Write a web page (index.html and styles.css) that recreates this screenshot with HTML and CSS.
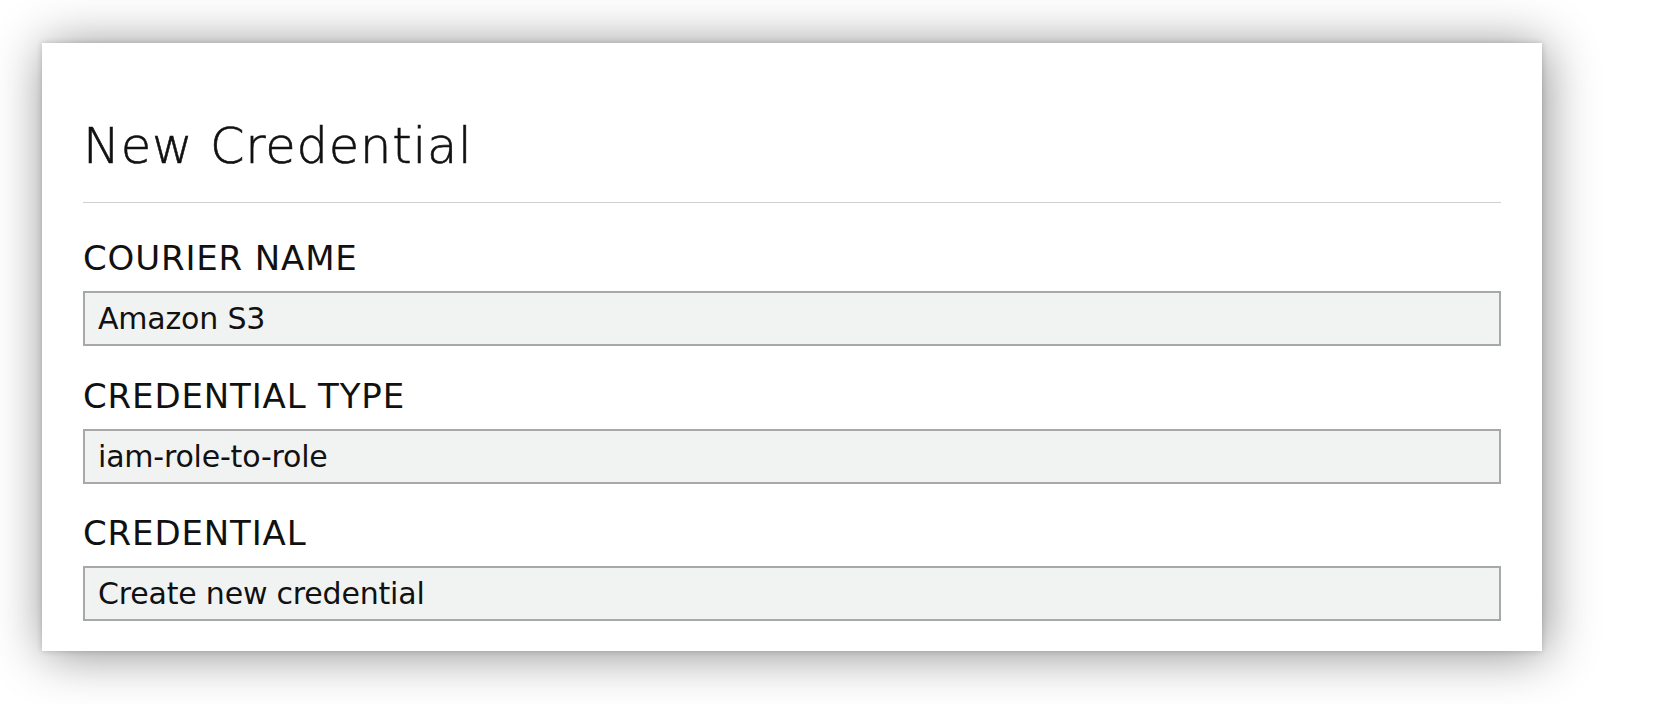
FILE: index.html
```html
<!DOCTYPE html>
<html>
<head>
<meta charset="utf-8">
<link rel="stylesheet" href="styles.css">
</head>
<body>
<div class="page">
  <div class="card">
    <h1 class="title">New Credential</h1>
    <div class="field">
      <div class="label">COURIER NAME</div>
      <div class="box">Amazon S3</div>
    </div>
    <div class="field">
      <div class="label">CREDENTIAL TYPE</div>
      <div class="box">iam-role-to-role</div>
    </div>
    <div class="field">
      <div class="label">CREDENTIAL</div>
      <div class="box">Create new credential</div>
    </div>
  </div>
</div>
</body>
</html>
```

FILE: styles.css
```css
html, body {
  margin: 0;
  padding: 0;
  background: #ffffff;
}
body {
  font-family: "DejaVu Sans", "Liberation Sans", sans-serif;
  color: #111111;
}
.page {
  padding: 43px 0 53px 42px;
}
.card {
  box-sizing: border-box;
  width: 1500px;
  background: #ffffff;
  padding: 73px 41px 30px 41px;
  box-shadow: 0 0 6px rgba(0, 0, 0, 0.18), 3px 3px 48px rgba(0, 0, 0, 0.45);
}
.title {
  margin: 0;
  font-size: 49.5px;
  line-height: 60px;
  font-weight: 200;
  letter-spacing: 0.8px;
  -webkit-text-stroke: 0.6px #111111;
  padding-bottom: 26px;
  border-bottom: 1px solid #cfcfcf;
  margin-bottom: 35px;
}
.field {
  display: flex;
  flex-direction: column;
  gap: 13px;
}
.field + .field {
  margin-top: 29.5px;
}
.label {
  font-size: 34px;
  line-height: 40px;
  letter-spacing: 0.85px;
}
.box {
  height: 51px;
  line-height: 51px;
  border: 2px solid #a8a8a8;
  background: #f1f3f2;
  padding-left: 13px;
  font-size: 30px;
  letter-spacing: -0.2px;
}
```
